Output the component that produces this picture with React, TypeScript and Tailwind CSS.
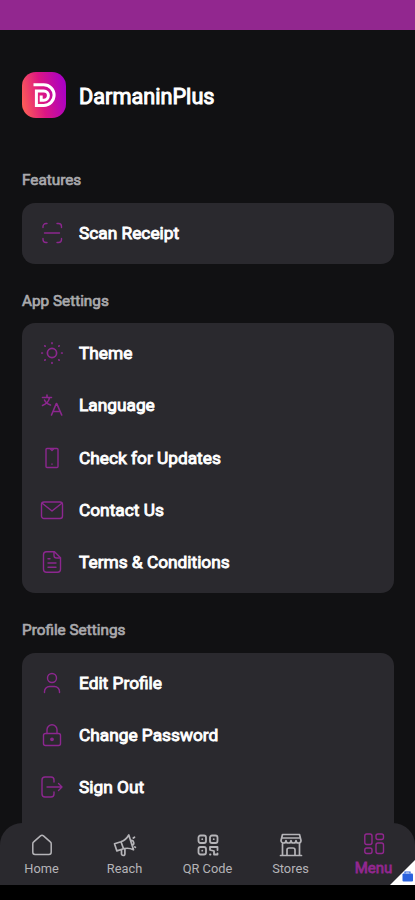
import type { ReactNode } from "react";

type IconProps = { children: ReactNode; className?: string; width?: number };

function Icon({ children, className = "size-6", width = 1.4 }: IconProps) {
  return (
    <svg
      viewBox="0 0 24 24"
      className={`${className} shrink-0`}
      fill="none"
      stroke="currentColor"
      strokeWidth={width}
      strokeLinecap="round"
      strokeLinejoin="round"
    >
      {children}
    </svg>
  );
}

const scan = (
  <Icon>
    <path d="M3 6.500V5.500a3 3 0 0 1 3-3h1M17 2.500h1.500a3 3 0 0 1 3 3v1M21.500 17.500v1a3 3 0 0 1-3 3H17M7 21.500H6a3 3 0 0 1-3-3v-1M4.500 12h15" />
  </Icon>
);
const sun = (
  <Icon width={1.7}>
    <circle cx="12" cy="12" r="4.600" />
    <path d="M12 1.800v.6M12 21.600v.6M1.800 12h.6M21.600 12h.6M4.800 4.800l.4.4M18.800 18.800l.4.4M4.800 19.200l.4-.4M18.800 5.200l.4-.4" />
  </Icon>
);
const language = (
  <Icon width={1.6}>
    <path d="M2.500 4.500h9M7 2v2.500M9.500 4.500C9 8.500 6 11 2.500 12.500M4.500 7c1 2.500 3 4 6 5" />
    <path d="M11.500 22l4.800-11.500h.4L21.700 22M13.300 18.500h6.600" />
  </Icon>
);
const phone = (
  <Icon width={1.4}>
    <rect x="6" y="2.500" width="12" height="19" rx="1" />
    <path d="M10.500 3l1.500 1.500L13.500 3M12 18v.3" />
  </Icon>
);
const mail = (
  <Icon>
    <rect x="1.500" y="4" width="21" height="16.500" rx="2.500" />
    <path d="M2.500 5.500 12 13l9.500-7.500" />
  </Icon>
);
const document = (
  <Icon>
    <path d="M14.500 1.800H6.500a3 3 0 0 0-3 3v14.500a3 3 0 0 0 3 3h11a3 3 0 0 0 3-3V7.800z" />
    <path d="M14 2v3.500a2.500 2.500 0 0 0 2.500 2.500h4M8 8.800h2M8 13h8M8 17.200h8" />
  </Icon>
);
const user = (
  <Icon>
    <circle cx="12" cy="7" r="4.500" />
    <path d="M4.500 21.500v-1a5 5 0 0 1 5-5h5a5 5 0 0 1 5 5v1" />
  </Icon>
);
const lock = (
  <Icon>
    <rect x="3.500" y="10.500" width="17" height="12" rx="2" />
    <path d="M7 10.500V6.800a5 5 0 0 1 10 0v3.700" />
    <circle cx="12" cy="16.300" r="1.200" fill="currentColor" />
  </Icon>
);
const signOut = (
  <Icon>
    <path d="M14 7V5a3 3 0 0 0-3-3H5a3 3 0 0 0-3 3v14a3 3 0 0 0 3 3h6a3 3 0 0 0 3-3v-2M7 12h15M18.500 8.500 22 12l-3.500 3.500" />
  </Icon>
);

const home = (
  <Icon width={1.5}>
    <path d="M2.800 10.800c0-.8.300-1.400.9-1.900l6.800-6c.9-.8 2.100-.8 3 0l6.800 6c.6.500.9 1.100.9 1.900v8.400a2.200 2.200 0 0 1-2.200 2.200H5a2.200 2.200 0 0 1-2.200-2.200z" />
  </Icon>
);
const megaphone = (
  <Icon width={1.7}>
    <path d="M1.500 10.800 8 8.700c3.300-1 5.800-3.200 7.800-6.700l4.700 14.800c-3.500-1.700-6.700-2-10-1l-6.600 2.100zM8 8.700l2.500 7.100M8.500 17v3.800a1.700 1.700 0 0 0 3.400 0v-5.300M17.700 7.500c3-.7 4.300 3.600 1.500 4.800M20.300 5l1.200-.8M21.800 14l.6.300" />
  </Icon>
);
const qr = (
  <Icon width={1.8}>
    <rect x="2.500" y="2.500" width="7.500" height="7.500" rx="2" />
    <rect x="14" y="2.500" width="7.500" height="7.500" rx="2" />
    <rect x="2.500" y="14" width="7.500" height="7.500" rx="2" />
    <path d="M6.200 6.200h.1M17.700 6.200h.1M6.200 17.700h.1M14 14h7.500v3M14 14v3l4 1v3.500h3.500v-1M14 21.500h.5" />
  </Icon>
);
const store = (
  <Icon width={1.7}>
    <path d="M3.500 1.500h17l1.500 6a2.500 2.500 0 0 1-5 0 2.500 2.500 0 0 1-5 0 2.500 2.500 0 0 1-5 0A2.500 2.500 0 0 1 2 7.500zM3 5h18M3.500 10.500V22M20.500 10.500V22M1.500 22.500h21M8 22v-5a2 2 0 0 1 2-2h4a2 2 0 0 1 2 2v5" />
  </Icon>
);
const menu = (
  <Icon width={1.4}>
    <rect x="2.800" y="2" width="7.200" height="10.500" rx="2" />
    <rect x="14" y="2" width="7.500" height="5.500" rx="2" />
    <rect x="2.800" y="16" width="7.200" height="5.500" rx="2" />
    <rect x="14" y="11" width="7.500" height="10.500" rx="2" />
  </Icon>
);

function Logo() {
  return (
    <svg viewBox="0 0 44 46" className="h-[46px] w-11 shrink-0">
      <defs>
        <linearGradient id="brand" x1="0" y1="0.600" x2="1" y2="0.400">
          <stop offset="0" stopColor="#fb5b58" />
          <stop offset="0.450" stopColor="#dc1683" />
          <stop offset="1" stopColor="#a900c6" />
        </linearGradient>
      </defs>
      <rect width="44" height="46" rx="14" fill="url(#brand)" />
      <path
        d="M11.500 12.800h10.300a10.300 10.300 0 0 1 0 20.600h-7.400V19h7.400a4.600 4.600 0 0 1 0 9.200h-2.600v-4.600"
        fill="none"
        stroke="#fff"
        strokeWidth="3"
      />
    </svg>
  );
}

type Item = { label: string; icon: ReactNode };
type Group = { title: string; items: Item[] };

const groups: Group[] = [
  {
    title: "Features",
    items: [{ label: "Scan Receipt", icon: scan }],
  },
  {
    title: "App Settings",
    items: [
      { label: "Theme", icon: sun },
      { label: "Language", icon: language },
      { label: "Check for Updates", icon: phone },
      { label: "Contact Us", icon: mail },
      { label: "Terms & Conditions", icon: document },
    ],
  },
  {
    title: "Profile Settings",
    items: [
      { label: "Edit Profile", icon: user },
      { label: "Change Password", icon: lock },
      { label: "Sign Out", icon: signOut },
    ],
  },
];

function Section({ title, items }: Group) {
  return (
    <section className="mb-[26.400px] last:mb-0">
      <h2 className="flex h-[33px] items-start pt-[0.400px] text-[15.300px] leading-5 text-[#a9a9ac] [-webkit-text-stroke:0.700px_#a9a9ac]">
        {title}
      </h2>
      <ul className="rounded-[13px] bg-[#2a292e] pt-[3.700px] pb-[5.100px] in-[section:last-child]:pb-10">
        {items.map((item) => (
          <li key={item.label} className="flex h-[52.250px] items-center gap-[15px] pl-[18px] text-[#8c278f]">
            {item.icon}
            <span className="text-[17.300px] leading-5 text-white [-webkit-text-stroke:0.900px_white]">
              {item.label}
            </span>
          </li>
        ))}
      </ul>
    </section>
  );
}

const tabs = [
  { label: "Home", icon: home },
  { label: "Reach", icon: megaphone },
  { label: "QR Code", icon: qr },
  { label: "Stores", icon: store },
  { label: "Menu", icon: menu, active: true },
];

export default function App() {
  return (
    <div className="relative flex h-[900px] w-[415px] flex-col overflow-hidden bg-[#111113] font-['Roboto',sans-serif]">
      <div className="h-[30px] shrink-0 bg-[#92278f]" />
      <main className="min-h-0 flex-1 overflow-hidden pr-[21px] pl-[22px]">
        <header className="flex h-[140px] items-start gap-[13px] pt-[42px]">
          <Logo />
          <h1 className="mt-[11px] text-[21.700px] leading-7 text-white [-webkit-text-stroke:1px_white]">
            DarmaninPlus
          </h1>
        </header>
        {groups.map((group) => (
          <Section key={group.title} {...group} />
        ))}
      </main>
      <nav className="absolute inset-x-0 bottom-[15px] grid h-[62px] grid-cols-5 rounded-t-[22px] bg-[#2a292e]">
        {tabs.map((tab) => (
          <div
            key={tab.label}
            className={`flex flex-col items-center ${tab.active ? "pt-[9px] text-[#92278f]" : "pt-[10px] text-[#b5b4b8]"}`}
          >
            {tab.icon}
            <span
              className={
                tab.active
                  ? "mt-[4px] text-[15px] leading-4 [-webkit-text-stroke:0.800px_#92278f]"
                  : "mt-[4px] text-[12.800px] leading-4"
              }
            >
              {tab.label}
            </span>
          </div>
        ))}
      </nav>
      <div className="absolute inset-x-0 bottom-0 h-[15px] bg-black" />
      <svg className="absolute right-0 bottom-[15px] h-[25px] w-[25px]" viewBox="0 0 25 25">
        <path d="M25 0v25H0z" fill="#fff" />
        <path d="M15 13.500V12h5v1.500" fill="none" stroke="#2b62de" strokeWidth="1.200" />
        <rect x="12.500" y="13.500" width="10.500" height="8" rx="1" fill="#2b62de" />
      </svg>
    </div>
  );
}
